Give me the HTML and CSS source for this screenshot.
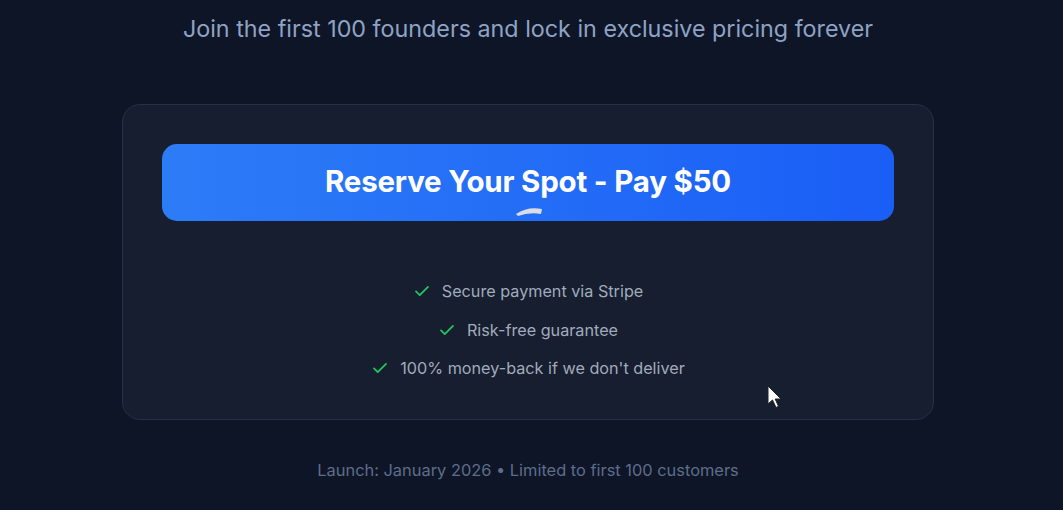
FILE: index.html
```html
<!DOCTYPE html>
<html lang="en">
  <head>
    <meta charset="UTF-8" />
    <meta name="viewport" content="width=device-width, initial-scale=1.0" />
    <title>Founders Pricing</title>
    <link rel="stylesheet" href="styles.css">
  </head>
  <body>
    <p class="subtitle">Join the first 100 founders and lock in exclusive pricing forever</p>

    <div class="card">
      <button class="cta" type="button">
        Reserve Your Spot - Pay $50
        <svg class="spinner" width="30" height="12" viewBox="0 0 30 12">
          <path d="M2 10 Q14 2 28 5 L27 10 Q15 8 4 12 Z" fill="#d9dde4" />
        </svg>
      </button>

      <ul class="perks">
        <li>
          <svg width="18" height="18" viewBox="0 0 24 24"><path d="M4 12.5l5 5L20 6.5" fill="none" stroke="#22c55e" stroke-width="2.4" stroke-linecap="round" stroke-linejoin="round"/></svg>
          Secure payment via Stripe
        </li>
        <li>
          <svg width="18" height="18" viewBox="0 0 24 24"><path d="M4 12.5l5 5L20 6.5" fill="none" stroke="#22c55e" stroke-width="2.4" stroke-linecap="round" stroke-linejoin="round"/></svg>
          Risk-free guarantee
        </li>
        <li>
          <svg width="18" height="18" viewBox="0 0 24 24"><path d="M4 12.5l5 5L20 6.5" fill="none" stroke="#22c55e" stroke-width="2.4" stroke-linecap="round" stroke-linejoin="round"/></svg>
          100% money-back if we don't deliver
        </li>
      </ul>

      <svg class="cursor" width="16" height="24" viewBox="0 0 16 24">
        <path d="M1 1 L1 19 L5.5 15 L9 22.5 L11.5 21.3 L8.2 14 L14 14 Z" fill="#fff" stroke="#222" stroke-width="1" />
      </svg>
    </div>

    <p class="note">Launch: January 2026 &bull; Limited to first 100 customers</p>
  </body>
</html>
```

FILE: styles.css
```css
body {
  margin: 0;
  padding-right: 7px;
  background: #0e1527;
  font-family: Inter, "Noto Sans", sans-serif;
  text-align: center;
}
.subtitle {
  margin: 0;
  padding-top: 14px;
  font-size: 23.3px;
  line-height: 30px;
  color: #8ea3c3;
}
.card {
  position: relative;
  width: 812px;
  box-sizing: border-box;
  margin: 60px auto 0;
  padding: 39px 39px 38px;
  background: #161e2f;
  border: 1px solid #273144;
  border-radius: 18px;
}
.cta {
  position: relative;
  display: block;
  width: 100%;
  height: 77px;
  padding: 0 0 4px;
  border: none;
  border-radius: 15px;
  background: linear-gradient(90deg, #2d7cf7, #1a5ef6);
  color: #fff;
  font-family: Inter, "Noto Sans", sans-serif;
  font-size: 29.5px;
  font-weight: 700;
  letter-spacing: -0.2px;
}
.spinner {
  position: absolute;
  left: 352px;
  top: 60px;
}
.perks {
  list-style: none;
  margin: 58px 0 0;
  padding: 0;
  display: flex;
  flex-direction: column;
  align-items: center;
  gap: 14px;
}
.perks li {
  display: flex;
  align-items: center;
  gap: 11px;
  font-size: 16.2px;
  line-height: 24.5px;
  color: #a1abbb;
}
.cursor {
  position: absolute;
  left: 644px;
  top: 280px;
}
.note {
  margin: 40px 0 0;
  font-size: 16.4px;
  color: #5e6d8a;
}
```
